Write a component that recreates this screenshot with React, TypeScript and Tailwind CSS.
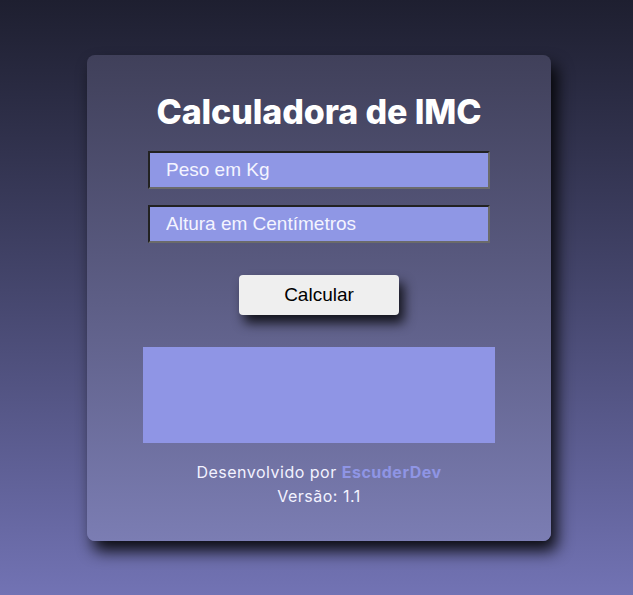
import React from "react";

export default function App() {
  return (
    <div className="min-h-screen w-full bg-gradient-to-b from-[#1e1f30] to-[#7273b4] pt-[55px] font-['Liberation_Sans',Arial,sans-serif]">
      <div className="ml-[87px] flex h-[486px] w-[464px] flex-col items-center rounded-lg bg-gradient-to-b from-[#40405a] to-[#7b7db3] shadow-[6px_10px_16px_rgba(0,0,0,0.9)]">
        <h1 className="mt-[33px] font-['Inter','Noto_Sans',sans-serif] text-[34px] font-extrabold leading-[48px] tracking-[-0.1px] text-white">
          Calculadora de IMC
        </h1>
        <input
          placeholder="Peso em Kg"
          className="mt-[15px] h-[38px] w-[342px] border-2 border-t-[#222] border-l-[#222] border-b-[#6b6b6b] border-r-[#6b6b6b] bg-[#8f97e5] pl-4 text-[19px] text-white outline-none placeholder:text-[#f4f4ff]"
        />
        <input
          placeholder="Altura em Centímetros"
          className="mt-[16px] h-[38px] w-[342px] border-2 border-t-[#222] border-l-[#222] border-b-[#6b6b6b] border-r-[#6b6b6b] bg-[#8f97e5] pl-4 text-[19px] text-white outline-none placeholder:text-[#f4f4ff]"
        />
        <button className="mt-[32px] h-[40px] w-[160px] rounded-[4px] bg-[#efefef] text-[19px] text-black shadow-[5px_8px_12px_rgba(0,0,0,0.8)]">
          Calcular
        </button>
        <div className="mt-[32px] h-[96px] w-[352px] bg-[#8f95e5]" />
        <div className="mt-[17px] text-center font-['Inter','Noto_Sans',sans-serif] text-[16px] leading-[24px] tracking-[0.5px] text-[#f2f2ff]">
          <p>
            Desenvolvido por <span className="font-bold text-[#8f95e5]">EscuderDev</span>
          </p>
          <p>Versão: 1.1</p>
        </div>
      </div>
    </div>
  );
}
